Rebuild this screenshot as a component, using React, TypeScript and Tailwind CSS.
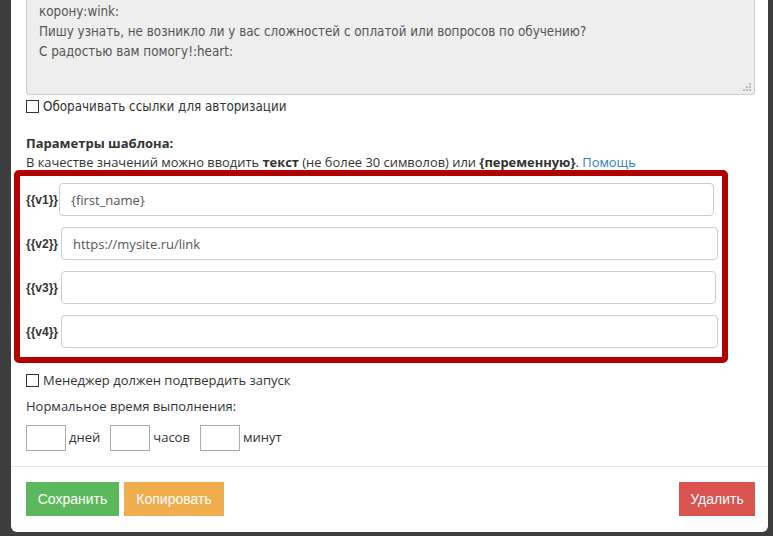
import { useState } from "react";

const Field = ({ label, value, ml }: { label: string; value: string; ml: string }) => {
  const [val, setVal] = useState(value);
  return (
    <div className="flex items-center">
      <span className="w-[33px] shrink-0 font-['Liberation_Sans',sans-serif] text-[12px] font-bold text-[#333]">{label}</span>
      <input
        value={val}
        onChange={(e) => setVal(e.target.value)}
        className={`h-[33px] flex-1 rounded-[4px] border border-[#ccc] bg-white px-[11px] text-[13px] text-[#555] outline-none ${ml}`}
      />
    </div>
  );
};

const TimeBox = ({ unit }: { unit: string }) => (
  <div className="flex items-center">
    <input className="h-[26px] w-[40px] border border-[#aaa] bg-white outline-none" />
    <span className="ml-[3px] text-[13px] text-[#333]">{unit}</span>
  </div>
);

const App = () => {
  const fields = [
    { label: "{{v1}}", value: "{first_name}", ml: "ml-0 mr-[4px]" },
    { label: "{{v2}}", value: "https://mysite.ru/link", ml: "ml-[2px] mr-0" },
    { label: "{{v3}}", value: "", ml: "ml-[2px] mr-[2px]" },
    { label: "{{v4}}", value: "", ml: "ml-[2px] mr-0" },
  ];

  return (
    <div className="h-[536px] w-[773px] overflow-hidden bg-[#3e3e3e] font-['Open_Sans',sans-serif]">
      <div className="ml-[11px] h-[532px] w-[757px] rounded-b-[6px] bg-white pl-[15px] pr-[13px]">
        <div className="relative h-[95px] rounded-b-[4px] border border-t-0 border-[#ccc] bg-[#eee] pl-[12px] pt-[2px] font-['DejaVu_Sans_Condensed',sans-serif] text-[13.3px] leading-[20px] text-[#555]">
          <p>корону:wink:</p>
          <p>Пишу узнать, не возникло ли у вас сложностей с оплатой или вопросов по обучению?</p>
          <p>С радостью вам помогу!:heart:</p>
          <svg className="absolute bottom-[3px] right-[3px]" width="8" height="8" viewBox="0 0 8 8">
            <rect x="6" y="0" width="2" height="2" fill="#bbb" />
            <rect x="3" y="3" width="2" height="2" fill="#bbb" />
            <rect x="6" y="3" width="2" height="2" fill="#bbb" />
            <rect x="0" y="6" width="2" height="2" fill="#bbb" />
            <rect x="3" y="6" width="2" height="2" fill="#bbb" />
            <rect x="6" y="6" width="2" height="2" fill="#bbb" />
          </svg>
        </div>

        <label className="mt-[5px] flex items-center font-['DejaVu_Sans_Condensed',sans-serif] text-[13.3px] leading-[13px] text-[#333]">
          <span className="mr-[4px] h-[13px] w-[13px] border border-[#333] bg-white" />
          Оборачивать ссылки для авторизации
        </label>

        <h4 className="mt-[21px] text-[13px] font-bold leading-[19px] text-[#333]">Параметры шаблона:</h4>
        <p className="text-[12.9px] leading-[19px] text-[#333]">
          В качестве значений можно вводить <b>текст</b> (не более 30 символов) или <b>{"{переменную}"}</b>.{" "}
          <a className="text-[#337ab7]">Помощь</a>
        </p>

        <div className="-ml-[12px] mt-[-2px] flex w-[714px] flex-col gap-[11px] rounded-[5px] border-[6px] border-[#b20000] pb-[9px] pl-[6px] pr-[4px] pt-[7px]">
          {fields.map((f) => (
            <Field key={f.label} label={f.label} value={f.value} ml={f.ml} />
          ))}
        </div>

        <label className="mt-[11px] flex items-center text-[13px] leading-[13px] text-[#333]">
          <span className="mr-[4px] h-[13px] w-[13px] border border-[#333] bg-white" />
          Менеджер должен подтвердить запуск
        </label>

        <p className="mt-[13px] text-[13px] leading-[13px] text-[#333]">Нормальное время выполнения:</p>

        <div className="mt-[12px] flex gap-[10px]">
          <TimeBox unit="дней" />
          <TimeBox unit="часов" />
          <TimeBox unit="минут" />
        </div>

        <div className="-ml-[15px] -mr-[13px] mt-[15px] border-t border-[#e5e5e5]" />

        <div className="mt-[15px] flex items-center font-['Liberation_Sans',sans-serif]">
          <button className="h-[34px] w-[93px] bg-[#5cb85c] text-[14px] text-white">Сохранить</button>
          <button className="ml-[5px] h-[34px] w-[100px] bg-[#f0ad4e] text-[14px] text-white">Копировать</button>
          <button className="ml-auto h-[34px] w-[76px] bg-[#d9534f] text-[14px] text-white">Удалить</button>
        </div>
      </div>
    </div>
  );
};

export default App;
